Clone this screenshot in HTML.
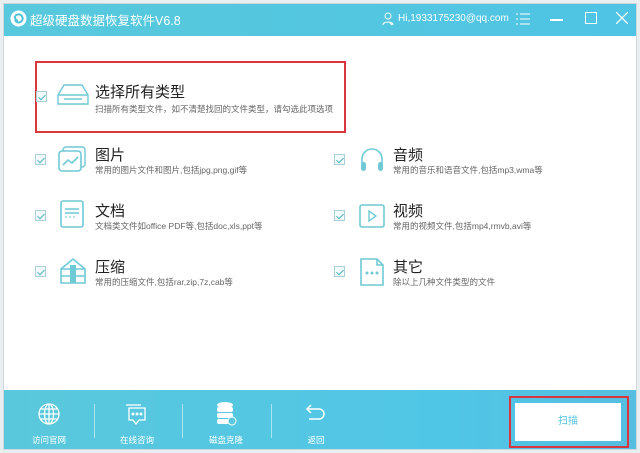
<!DOCTYPE html>
<html><head><meta charset="utf-8"><style>
*{margin:0;padding:0;box-sizing:border-box}
body{width:640px;height:453px;background:#e9eef0;font-family:"Liberation Sans","Noto Sans CJK SC",sans-serif;position:relative;overflow:hidden}
.win{position:absolute;left:3px;top:3px;width:634px;height:447px;background:#fff;border:1px solid #cfd8dc}
.title{position:absolute;left:0;top:0;width:632px;height:32px;background:linear-gradient(90deg,#58c9dc,#4fc4e4);color:#fff}
.abs{position:absolute}
.cb{position:absolute;width:11px;height:11px;border:1px solid #a9cfd8;background:#f4f9fa}
.cb:after{content:"";position:absolute;left:3px;top:1px;width:3px;height:6px;border:solid #4cb6c9;border-width:0 1.5px 1.5px 0;transform:rotate(45deg)}
.t{position:absolute;font-size:15px;color:#222}
.d{position:absolute;font-size:8.5px;color:#666;white-space:nowrap}
.bot{position:absolute;left:0;top:386px;width:632px;height:59px;background:linear-gradient(90deg,#5ac8dc,#50c6e6 70%,#56bde0)}
.bl{position:absolute;font-size:8.5px;color:#fff;top:44px;width:60px;text-align:center}
.sep{position:absolute;top:14px;width:1px;height:34px;background:rgba(255,255,255,.5)}
</style></head><body>
<div class="win">
<div class="title">
 <svg class="abs" style="left:6px;top:6px" width="17" height="17" viewBox="0 0 17 17"><circle cx="8.5" cy="8.5" r="8" fill="#fff"/><path d="M5 10a4 4 0 1 0 3-5.5 3 3 0 0 0 0 6" stroke="#4cc3db" stroke-width="2" fill="none"/></svg>
 <div class="abs" style="left:26px;top:6px;font-size:12.5px">超级硬盘数据恢复软件V6.8</div>
 <svg class="abs" style="left:378px;top:8px" width="12" height="14" viewBox="0 0 12 14"><circle cx="6" cy="4" r="3" stroke="#fff" fill="none"/><path d="M1 13c0-4 10-4 10 0" stroke="#fff" fill="none"/><path d="M7 10l3 3" stroke="#fff"/></svg>
 <div class="abs" style="left:394px;top:9px;font-size:10px">Hi,1933175230@qq.com</div>
 <svg class="abs" style="left:512px;top:8px" width="14" height="14"><path d="M0 2h2M4 2h10M0 7h2M4 7h10M0 12h2M4 12h10" stroke="#fff"/></svg>
 <div class="abs" style="left:546px;top:15px;width:13px;height:1.5px;background:#fff"></div>
 <div class="abs" style="left:581px;top:8px;width:12px;height:12px;border:1px solid #fff"></div>
 <svg class="abs" style="left:612px;top:8px" width="12" height="12"><path d="M0 0l12 12M12 0L0 12" stroke="#fff" stroke-width="1.2"/></svg>
</div>

<div class="abs" style="left:31px;top:57px;width:311px;height:72px;border:2px solid #d9363e"></div>
<div class="cb" style="left:32px;top:87px"></div>
<svg class="abs" style="left:52px;top:79px" width="34" height="24"><path d="M2 12L8 2h18l6 10v9H2z M2 12h30" stroke="#6fcad6" stroke-width="1.4" fill="none"/><path d="M8 16h18" stroke="#6fcad6" stroke-width="1.4"/></svg>
<div class="t" style="left:91px;top:77px">选择所有类型</div>
<div class="d" style="left:91px;top:99px">扫描所有类型文件，如不清楚找回的文件类型，请勾选此项选项</div>

<div class="cb" style="left:31px;top:150px"></div>
<svg class="abs" style="left:54px;top:142px" width="28" height="26"><rect x="5" y="1" width="22" height="20" rx="3" stroke="#6fcad6" stroke-width="1.4" fill="none"/><rect x="1" y="5" width="22" height="20" rx="3" stroke="#6fcad6" stroke-width="1.6" fill="#fff"/><path d="M5 19l5-5 4 3 6-6" stroke="#6fcad6" stroke-width="1.6" fill="none"/></svg>
<div class="t" style="left:91px;top:140px">图片</div>
<div class="d" style="left:91px;top:160px">常用的图片文件和图片,包括jpg,png,gif等</div>

<div class="cb" style="left:31px;top:206px"></div>
<svg class="abs" style="left:56px;top:196px" width="24" height="28"><rect x="1" y="1" width="22" height="26" rx="2" stroke="#6fcad6" stroke-width="1.6" fill="none"/><path d="M5 9h14M5 13h14" stroke="#6fcad6" stroke-width="1.4"/><path d="M5 17h2M9 17h2M13 17h2" stroke="#6fcad6"/></svg>
<div class="t" style="left:91px;top:196px">文档</div>
<div class="d" style="left:91px;top:216px">文档类文件如office PDF等,包括doc,xls,ppt等</div>

<div class="cb" style="left:31px;top:262px"></div>
<svg class="abs" style="left:54px;top:253px" width="30" height="28"><path d="M3 12L15 2l12 10v14H3z M3 12h24M3 19h24" stroke="#6fcad6" stroke-width="1.6" fill="none"/><rect x="12" y="8" width="6" height="18" fill="#6fcad6"/></svg>
<div class="t" style="left:91px;top:252px">压缩</div>
<div class="d" style="left:91px;top:272px">常用的压缩文件,包括rar,zip,7z,cab等</div>

<div class="cb" style="left:330px;top:150px"></div>
<svg class="abs" style="left:355px;top:143px" width="26" height="26"><path d="M3 16v-4a10 10 0 0 1 20 0v4" stroke="#6fcad6" stroke-width="1.6" fill="none"/><rect x="2" y="15" width="5" height="9" rx="2.5" fill="#6fcad6"/><rect x="19" y="15" width="5" height="9" rx="2.5" fill="#6fcad6"/></svg>
<div class="t" style="left:389px;top:140px">音频</div>
<div class="d" style="left:389px;top:160px">常用的音乐和语音文件,包括mp3,wma等</div>

<div class="cb" style="left:330px;top:206px"></div>
<svg class="abs" style="left:355px;top:200px" width="26" height="24"><rect x="1" y="1" width="24" height="22" rx="2" stroke="#6fcad6" stroke-width="1.6" fill="none"/><path d="M10 7l7 5-7 5z" stroke="#6fcad6" stroke-width="1.4" fill="none"/></svg>
<div class="t" style="left:389px;top:196px">视频</div>
<div class="d" style="left:389px;top:216px">常用的视频文件,包括mp4,rmvb,avi等</div>

<div class="cb" style="left:330px;top:262px"></div>
<svg class="abs" style="left:356px;top:254px" width="26" height="28"><path d="M1 1h16l6 6v20H1z M17 1v6h6" stroke="#6fcad6" stroke-width="1.6" fill="none"/><circle cx="7" cy="15" r="1.5" fill="#6fcad6"/><circle cx="12" cy="15" r="1.5" fill="#6fcad6"/><circle cx="17" cy="15" r="1.5" fill="#6fcad6"/></svg>
<div class="t" style="left:389px;top:252px">其它</div>
<div class="d" style="left:389px;top:272px">除以上几种文件类型的文件</div>

<div class="bot">
 <svg class="abs" style="left:34px;top:13px" width="22" height="22" viewBox="0 0 22 22" fill="none" stroke="#fff" stroke-width="1.3"><circle cx="11" cy="11" r="10"/><ellipse cx="11" cy="11" rx="4.5" ry="10"/><path d="M1 11h20M3 6h16M3 16h16M11 1v20"/></svg>
 <div class="bl" style="left:15px">访问官网</div>
 <div class="sep" style="left:90px"></div>
 <svg class="abs" style="left:121px;top:13px" width="24" height="24" fill="none" stroke="#fff" stroke-width="1.3"><path d="M4 5h16v12h-6l-3 4-3-4H4z"/><path d="M1 2h15"/><circle cx="8" cy="11" r=".8" fill="#fff"/><circle cx="12" cy="11" r=".8" fill="#fff"/><circle cx="16" cy="11" r=".8" fill="#fff"/></svg>
 <div class="bl" style="left:103px">在线咨询</div>
 <div class="sep" style="left:178px"></div>
 <svg class="abs" style="left:211px;top:11px" width="22" height="26"><ellipse cx="10" cy="4" rx="8" ry="3" fill="#fff"/><rect x="2" y="6" width="16" height="5" rx="2" fill="#fff"/><rect x="2" y="12" width="16" height="5" rx="2" fill="#fff"/><rect x="2" y="18" width="12" height="5" rx="2" fill="#fff"/><circle cx="17" cy="20" r="4" fill="#5ac8dc" stroke="#fff"/></svg>
 <div class="bl" style="left:192px">磁盘克隆</div>
 <div class="sep" style="left:267px"></div>
 <svg class="abs" style="left:301px;top:14px" width="22" height="20" fill="none" stroke="#fff" stroke-width="1.5"><path d="M6 1L2 5l4 4M2 5h12a5 5 0 0 1 0 10H4"/></svg>
 <div class="bl" style="left:282px">返回</div>
 <div class="abs" style="left:505px;top:6px;width:120px;height:52px;border:2px solid #d9363e"></div>
 <div class="abs" style="left:511px;top:13px;width:106px;height:38px;background:#fff;color:#4fc3dd;font-size:10px;text-align:center;line-height:38px">扫描</div>
</div>
</div>
</body></html>
